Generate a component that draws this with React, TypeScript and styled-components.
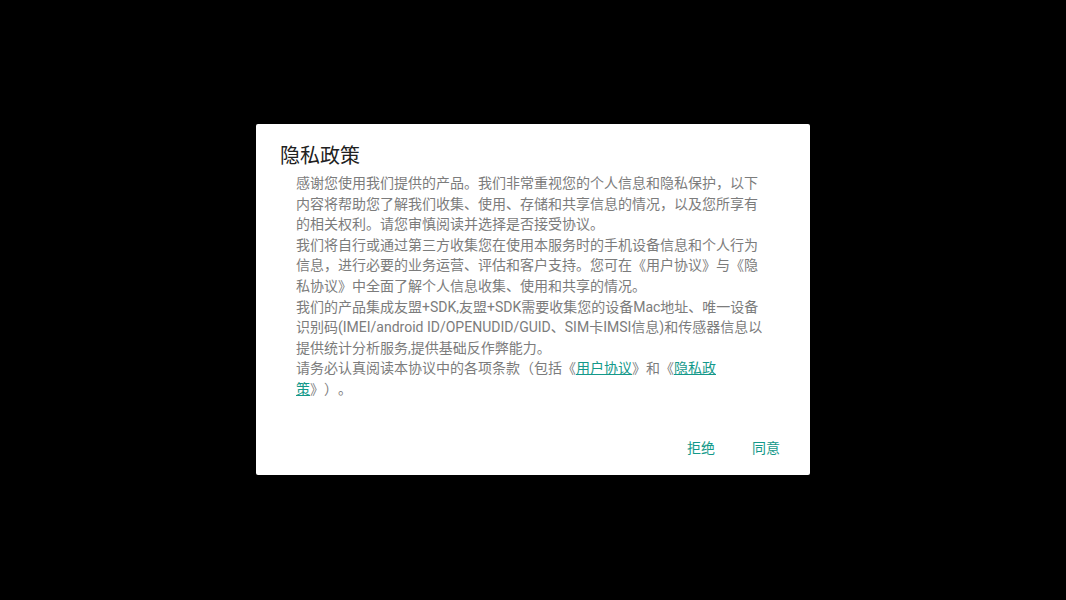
import React from "react";
import styled, { createGlobalStyle } from "styled-components";

const GlobalStyle = createGlobalStyle`
  html, body {
    margin: 0;
    padding: 0;
    background: #000000;
  }
  body {
    font-family: Roboto, "Noto Sans CJK SC", sans-serif;
    text-spacing-trim: space-all;
  }
`;

const Screen = styled.div`
  width: 1066px;
  height: 600px;
  box-sizing: border-box;
  background: #000000;
  padding: 124px 0 0 256px;
`;

const Dialog = styled.div`
  width: 554px;
  height: 351px;
  box-sizing: border-box;
  background: #ffffff;
  border-radius: 2px;
  padding: 18px 22px 9px 24px;
  display: flex;
  flex-direction: column;
`;

const Title = styled.h2`
  margin: 0;
  font-size: 20px;
  line-height: 28px;
  font-weight: 400;
  color: #212121;
  font-family: Roboto, "Noto Sans CJK SC", sans-serif;
`;

const Body = styled.div`
  margin: 3px 0 0 16px;
  width: 470px;
  font-size: 14px;
  line-height: 20.6px;
  color: #7c7c7c;
  text-spacing-trim: space-all;
`;

const Paragraph = styled.p`
  margin: 0;
`;

const Link = styled.a`
  color: #14998a;
  text-decoration: underline;
  text-underline-offset: 1px;
  cursor: pointer;
`;

const Actions = styled.div`
  margin-top: auto;
  display: flex;
  justify-content: flex-end;
  gap: 21px;
`;

const ActionButton = styled.button`
  border: none;
  background: transparent;
  padding: 8px 8px;
  font-family: Roboto, "Noto Sans CJK SC", sans-serif;
  font-size: 14px;
  line-height: 20px;
  color: #14998a;
  cursor: pointer;
`;

export default function App() {
  return (
    <>
      <GlobalStyle />
      <Screen>
        <Dialog>
          <Title>隐私政策</Title>
          <Body>
            <Paragraph>
              感谢您使用我们提供的产品。我们非常重视您的个人信息和隐私保护，以下内容将帮助您了解我们收集、使用、存储和共享信息的情况，以及您所享有的相关权利。请您审慎阅读并选择是否接受协议。
            </Paragraph>
            <Paragraph>
              我们将自行或通过第三方收集您在使用本服务时的手机设备信息和个人行为信息，进行必要的业务运营、评估和客户支持。您可在《用户协议》与《隐私协议》中全面了解个人信息收集、使用和共享的情况。
            </Paragraph>
            <Paragraph>
              我们的产品集成友盟+SDK,友盟+SDK需要收集您的设备Mac地址、唯一设备识别码(IMEI/android ID/OPENUDID/GUID、SIM卡IMSI信息)和传感器信息以提供统计分析服务,提供基础反作弊能力。
            </Paragraph>
            <Paragraph>
              请务必认真阅读本协议中的各项条款（包括《<Link>用户协议</Link>》和《<Link>隐私政策</Link>》）。
            </Paragraph>
          </Body>
          <Actions>
            <ActionButton>拒绝</ActionButton>
            <ActionButton>同意</ActionButton>
          </Actions>
        </Dialog>
      </Screen>
    </>
  );
}
